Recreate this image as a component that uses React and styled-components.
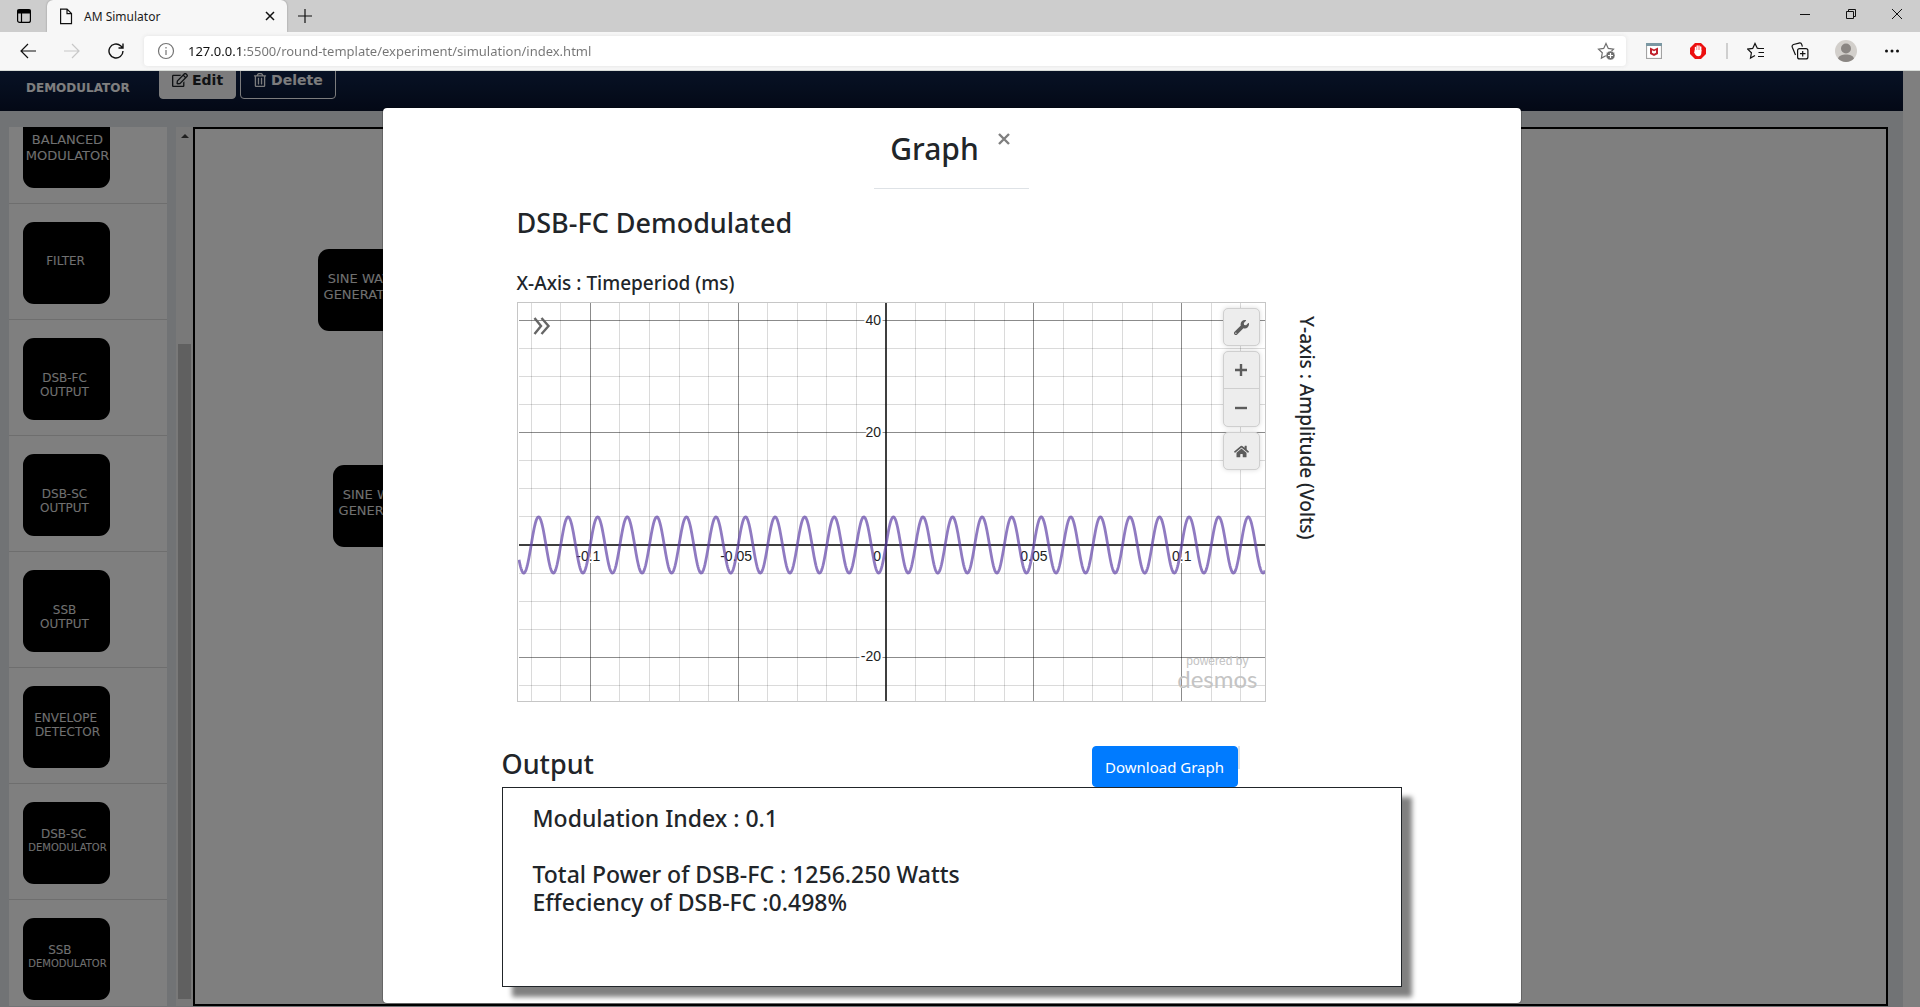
import React from "react";
import styled, { createGlobalStyle, css } from "styled-components";
import { FaHome, FaRegEdit, FaRegTrashAlt, FaWrench } from "react-icons/fa";

const uiFont = `"Noto Sans", "Open Sans", sans-serif`;

const GlobalStyle = createGlobalStyle`
  *, *::before, *::after { box-sizing: border-box; }
  body {
    margin: 0;
    font-family: ${uiFont};
    color: #212529;
    background: #fff;
  }
  h1, h2, h3, p { margin: 0; font-weight: 500; }
  button, input { font: inherit; }
`;

const Screen = styled.div`
  display: flex;
  flex-direction: column;
  height: 100vh;
  overflow: hidden;
`;

/* ---------- browser frame ---------- */

const TabStrip = styled.div`
  display: flex;
  flex: none;
  height: 32px;
  background: #cdcdcd;
`;

const TabMenu = styled.button`
  display: grid;
  place-items: center;
  width: 47px;
  padding: 0;
  border: 0;
  background: none;
`;

const Tab = styled.div`
  display: flex;
  align-items: center;
  gap: 11px;
  width: 240px;
  padding: 0 10px 0 12px;
  border-radius: 6px 6px 0 0;
  background: #f7f7f7;
  box-shadow: 0 0 2px #8a8a8a;
  font-size: 12px;
  color: #1b1b1b;
`;

const TabTitle = styled.span`
  flex: 1;
`;

const PlainButton = styled.button`
  display: grid;
  place-items: center;
  flex: none;
  width: ${(p) => p.$w || 44}px;
  padding: 0;
  border: 0;
  background: none;
  color: #111;
`;

const WindowButtons = styled.div`
  display: flex;
  height: 28px;
  margin-left: auto;
`;

const Toolbar = styled.div`
  display: flex;
  flex: none;
  align-items: center;
  height: 39px;
  padding: 0 6px;
  border-bottom: 1px solid #d8dcd8;
  background: #f7f7f7;
`;

const AddressBar = styled.form`
  display: flex;
  flex: 1;
  align-items: center;
  gap: 13px;
  height: 30px;
  margin: 0 6px;
  padding: 0 11px 0 13px;
  border-radius: 4px;
  background: #fff;
  box-shadow: 0 0 4px #e2e2e2;
`;

const AddressInput = styled.input`
  flex: 1;
  min-width: 0;
  padding: 0;
  border: 0;
  outline: 0;
  font-size: 13px;
  background: linear-gradient(90deg, #111 56px, #747474 56px);
  background-clip: text;
  color: transparent;
`;

const ToolDivider = styled.span`
  width: 2px;
  height: 16px;
  margin: 0 6px;
  background: #cfcfcf;
`;

/* ---------- page under the dialog ---------- */

const Viewport = styled.div`
  position: relative;
  display: flex;
  flex: 1;
  min-height: 0;
  overflow: hidden;
`;

const Page = styled.div`
  display: flex;
  flex: 1;
  flex-direction: column;
  min-width: 0;
  background: #e3e6ea;
`;

const PageScrollbar = styled.div`
  width: 17px;
  background: #fff;
`;

const Navbar = styled.header`
  display: flex;
  flex: none;
  align-items: flex-end;
  gap: 4px;
  height: 40px;
  padding: 0 26px 12px;
  overflow: hidden;
  background: linear-gradient(#10244a, #08122c);
  font-family: "DejaVu Sans", sans-serif;
  font-weight: 700;
`;

const Brand = styled.h1`
  width: 129px;
  font-size: 12px;
  line-height: 22px;
  font-weight: 700;
  color: #fff;
`;

const NavButton = styled.button`
  display: flex;
  flex: none;
  align-items: center;
  gap: 4px;
  height: 38px;
  padding: 0 12px;
  border: 1px solid #f8f9fa;
  border-radius: 4px;
  font-size: 14px;
  background: ${(p) => (p.$filled ? "#f8f9fa" : "transparent")};
  color: ${(p) => (p.$filled ? "#212529" : "#f8f9fa")};
`;

const Workspace = styled.div`
  display: flex;
  flex: 1;
  min-height: 0;
  padding: 16px 15px 1px 9px;
`;

const Palette = styled.ul`
  width: 158px;
  margin: 0 9px 0 0;
  padding: 0;
  overflow: hidden;
  list-style: none;
  background: #fff;
`;

const PaletteItem = styled.li`
  display: flex;
  align-items: flex-end;
  height: ${(p) => (p.$cut ? 77 : 116)}px;
  padding: 0 14px 15px;
  overflow: hidden;
  border-bottom: 1px solid #dcdcdc;
`;

const tileFace = css`
  display: flex;
  flex: none;
  flex-direction: column;
  align-items: center;
  justify-content: center;
  width: 87px;
  height: 82px;
  border: 0;
  border-radius: 11px;
  background: #000;
  color: #e0e0e0;
  font-family: "DejaVu Sans", sans-serif;
  white-space: pre;
`;

const tilePadding = {
  low: "12px 4px 0 0",
  middle: "2px 0 0 2px",
  high: "0 0 5px 2px",
};

const Tile = styled.div`
  ${tileFace}
  padding: ${(p) => tilePadding[p.$place || "high"]};
`;

const TileLine = styled.span`
  font-size: ${(p) => p.$size || 12}px;
  line-height: ${(p) => (p.$size === 13 ? 16 : 14)}px;
`;

const PaletteScrollbar = styled.div`
  display: flex;
  flex-direction: column;
  align-items: center;
  width: 17px;
  background: #f3f3f3;
`;

const ScrollArrow = styled.span`
  margin: 7px 0 206px;
  border: 4px solid transparent;
  border-top: 0;
  border-bottom-color: #404040;
`;

const ScrollThumb = styled.span`
  flex: 1;
  width: 13px;
  margin-bottom: 7px;
  background: #c1c1c1;
`;

const Canvas = styled.div`
  position: relative;
  flex: 1;
  border: 2px solid #000;
  background: #fff;
`;

const Node = styled.div`
  ${tileFace}
  position: absolute;
  padding: 0 0 6px 4px;
  left: ${(p) => p.$x}px;
  top: ${(p) => p.$y}px;
`;

/* ---------- dialog ---------- */

const Backdrop = styled.div`
  position: absolute;
  inset: 0;
  display: flex;
  align-items: flex-start;
  justify-content: center;
  padding: 36px 17px 0 0;
  background: rgba(0, 0, 0, 0.5);
`;

const Dialog = styled.section`
  width: 100%;
  max-width: 1140px;
  padding-bottom: 16px;
  border: 1px solid rgba(0, 0, 0, 0.2);
  border-radius: 5px;
  background: #fff;
  background-clip: padding-box;
`;

const DialogHeader = styled.header`
  display: flex;
  align-items: flex-start;
  gap: 16px;
  width: fit-content;
  margin: 0 auto;
  padding: 17px 16px 15px;
  border-bottom: 1px solid #dee2e6;
`;

const DialogTitle = styled.h2`
  font-size: 30px;
  line-height: 48px;
`;

const CloseButton = styled.button`
  display: grid;
  place-items: center;
  width: 18px;
  height: 28px;
  padding: 0;
  border: 0;
  background: none;
  color: #7f7f7f;
`;

const DialogBody = styled.div`
  max-width: 900px;
  margin: 0 auto;
  padding-top: 18px;
`;

const GraphSection = styled.div`
  padding-left: 15px;
`;

const GraphTitle = styled.h3`
  margin-bottom: 32px;
  font-size: 27px;
  line-height: 32px;
`;

const AxisName = styled.p`
  font-size: 19px;
  line-height: 24px;
  ${(p) =>
    p.$vertical
      ? css`
          padding-top: 14px;
          writing-mode: vertical-rl;
        `
      : css`
          margin-bottom: 7px;
        `}
`;

const GraphRow = styled.div`
  display: grid;
  grid-template-columns: minmax(0, 749px) auto;
  justify-content: start;
  gap: 29px;
`;

const Graph = styled.div`
  position: relative;
  border: 1px solid #c6c6c6;

  > svg {
    display: block;
    width: 100%;
    height: auto;
    font-family: "Liberation Sans", Arial, sans-serif;
  }
`;

const ExpandButton = styled.button`
  position: absolute;
  top: 14px;
  left: 15px;
  padding: 0;
  border: 0;
  background: none;
  line-height: 0;
`;

const GraphTools = styled.div`
  position: absolute;
  top: 5px;
  right: 5px;
  display: flex;
  flex-direction: column;
  gap: 5px;
`;

const ToolGroup = styled.div`
  display: flex;
  flex-direction: column;
  border: 1px solid #cfcfcf;
  border-radius: 5px;
  background: #ededed;
  box-shadow: 0 0 5px rgba(0, 0, 0, 0.15);
`;

const ToolButton = styled.button`
  display: grid;
  place-items: center;
  width: 35px;
  height: 36px;
  padding: 0;
  border: 0;
  background: none;
  color: #5c5c5c;

  & + & {
    height: 38px;
    border-top: 1px solid #cfcfcf;
  }
`;

const PoweredBy = styled.div`
  position: absolute;
  right: 7px;
  bottom: 10px;
  text-align: center;
  color: #c4c4c4;
  font: 12px/12px "Liberation Sans", Arial, sans-serif;
`;

const DesmosName = styled.div`
  font: 24px/24px Lato, sans-serif;
`;

const OutputHeader = styled.div`
  display: flex;
  align-items: flex-start;
  margin-top: 44px;
`;

const OutputTitle = styled.h3`
  flex: 1;
  font-size: 27px;
  line-height: 36px;
`;

const DownloadButton = styled.button`
  height: 41px;
  padding: 0 12px;
  min-width: 146px;
  border: 1px solid #007bff;
  border-radius: 4px;
  background: #007bff;
  color: #fff;
  font-size: 15px;
`;

const Sliver = styled.span`
  width: 2px;
  height: 23px;
  margin-right: 162px;
  background: #dee2e6;
`;

const OutputBox = styled.div`
  min-height: 200px;
  padding: 16px 30px;
  border: 1px solid #212529;
  background: #fff;
  box-shadow: 10px 10px 5px #808080;
  font-size: 23px;
  line-height: 28px;
`;

const OutputLine = styled.p`
  min-height: 28px;
`;

/* ---------- data ---------- */

const palette = [
  { lines: [["BALANCED", 13], ["MODULATOR", 13]], cut: true, place: "middle" },
  { lines: [["FILTER "]] },
  { lines: [["DSB-FC"], ["OUTPUT"]], place: "low" },
  { lines: [["DSB-SC"], ["OUTPUT"]], place: "low" },
  { lines: [["SSB"], ["OUTPUT"]], place: "low" },
  { lines: [["ENVELOPE "], ["DETECTOR"]] },
  { lines: [["DSB-SC  "], ["DEMODULATOR", 10]] },
  { lines: [["SSB    "], ["DEMODULATOR", 10]] },
];

const nodes = [
  { x: 123, y: 120 },
  { x: 138, y: 336 },
];

const results = [
  "Modulation Index : 0.1",
  "",
  "Total Power of DSB-FC : 1256.250 Watts",
  "Effeciency of DSB-FC :0.498%",
];

/* ---------- graph drawing ---------- */

const W = 747;
const H = 398;
const OX = 368;
const OY = 242;
const DX = 29.57;
const DY = 28.05;

function wavePath() {
  let d = "";
  for (let x = 1; x <= W; x += 0.5) {
    const y = OY - DY * Math.sin(((x - OX) / DX) * 2 * Math.PI);
    d += `${d ? "L" : "M"}${x} ${y.toFixed(2)}`;
  }
  return d;
}

const xLabels = [
  [-10, "-0.1"],
  [-5, "-0.05"],
  [5, "0.05"],
  [10, "0.1"],
];
const yLabels = [
  [8, "40"],
  [4, "20"],
  [-4, "-20"],
];

function Plot() {
  const cols = [];
  for (let i = -12; i <= 12; i++) if (i) cols.push(i);
  const rows = [];
  for (let j = -5; j <= 8; j++) if (j) rows.push(j);
  const halo = { stroke: "#fff", strokeWidth: 4, paintOrder: "stroke", strokeLinejoin: "round" };
  return (
    <svg viewBox={`0 0 ${W} ${H}`} role="img" aria-label="Demodulated sine wave">
      <g shapeRendering="crispEdges" stroke="#000">
        {cols.map((i) => {
          const x = Math.floor(OX + i * DX) + 0.5;
          return <line key={i} x1={x} x2={x} y1="0" y2={H} opacity={i % 5 ? 0.14 : 0.45} />;
        })}
        {rows.map((j) => {
          const y = Math.floor(OY - j * DY) + 0.5;
          return <line key={j} x1="1" x2={W} y1={y} y2={y} opacity={j % 4 ? 0.14 : 0.45} />;
        })}
        <line x1={OX} x2={OX} y1="0" y2={H} strokeWidth="2" opacity="0.75" />
        <line x1="1" x2={W} y1={OY} y2={OY} strokeWidth="2" opacity="0.75" />
      </g>
      <g fontSize="14" fill="#222" {...halo}>
        {xLabels.map(([i, t]) => (
          <text key={t} x={OX + i * DX - (i < 0 ? 2 : 0)} y="258" textAnchor="middle">{t}</text>
        ))}
        {yLabels.map(([j, t]) => (
          <text key={t} x={OX - 5} y={Math.round(OY - j * DY) + 4} textAnchor="end">{t}</text>
        ))}
        <text x={OX - 5} y="258" textAnchor="end">0</text>
      </g>
      <path d={wavePath()} fill="none" stroke="#6042a6" strokeWidth="2.8" opacity="0.7" />
    </svg>
  );
}

/* ---------- icons ---------- */

const Icon = ({ size = 16, children, stroke = "currentColor", sw = 1.2, ...rest }) => (
  <svg width={size} height={size} viewBox={`0 0 ${size} ${size}`} fill="none" stroke={stroke} strokeWidth={sw} aria-hidden="true" {...rest}>
    {children}
  </svg>
);

const STAR = "M9 1.5l2.3 4.9 5.2.7-3.8 3.7.9 5.3L9 13.600l-4.600 2.500.9-5.300L1.500 7.100l5.200-.7z";

function BrowserFrame() {
  return (
    <>
      <TabStrip>
        <TabMenu aria-label="Tab actions">
          <Icon size={14} stroke="#000">
            <rect x="0.600" y="0.600" width="12.800" height="12.800" rx="2" />
            <path d="M1 1h12v3H1z" fill="#000" />
            <path d="M4.500 4v9" />
          </Icon>
        </TabMenu>
        <Tab>
          <Icon size={17} style={{ width: 14 }} viewBox="0 0 14 17" stroke="#111">
            <path d="M1.600 1.100h6.400l4.500 4.500v10H1.600zM8 1.100v4.500h4.500" />
          </Icon>
          <TabTitle>AM Simulator</TabTitle>
          <PlainButton $w={14} aria-label="Close tab">
            <Icon size={10} sw={1.5}><path d="M1 1l8 8M9 1L1 9" /></Icon>
          </PlainButton>
        </Tab>
        <PlainButton $w={36} aria-label="New tab">
          <Icon size={14}><path d="M7 0v14M0 7h14" /></Icon>
        </PlainButton>
        <WindowButtons>
          <PlainButton $w={46} aria-label="Minimize">
            <Icon size={10} sw={1}><path d="M0 5.500h10" /></Icon>
          </PlainButton>
          <PlainButton $w={46} aria-label="Restore">
            <Icon size={10} sw={1}><path d="M.5 2.500h7v7h-7zM2.500 2.500v-2h7v7h-2" /></Icon>
          </PlainButton>
          <PlainButton $w={46} aria-label="Close window">
            <Icon size={10} sw={1}><path d="M0 0l10 10M10 0L0 10" /></Icon>
          </PlainButton>
        </WindowButtons>
      </TabStrip>
      <Toolbar>
        <PlainButton aria-label="Back">
          <Icon><path d="M16 8H1M8 1L1 8l7 7" /></Icon>
        </PlainButton>
        <PlainButton aria-label="Forward">
          <Icon stroke="#c8c8c8"><path d="M0 8h15M8 1l7 7-7 7" /></Icon>
        </PlainButton>
        <PlainButton aria-label="Refresh">
          <Icon sw={1.4}><path d="M15 8A7 7 0 1 1 12.600 2.700L15 5M15 .5V5h-4.500" /></Icon>
        </PlainButton>
        <AddressBar>
          <Icon size={18} stroke="#747474">
            <circle cx="9" cy="9" r="7.500" />
            <path d="M9 8v5M9 5v1.500" />
          </Icon>
          <AddressInput
            aria-label="Address"
            defaultValue="127.0.0.1:5500/round-template/experiment/simulation/index.html"
          />
          <Icon size={18} stroke="#6f6f6f">
            <path d={STAR} />
            <circle cx="13.500" cy="13.500" r="4.500" fill="#6f6f6f" stroke="#fff" strokeWidth="0.500" />
            <path d="M13.500 11v5M11 13.500h5" stroke="#fff" />
          </Icon>
        </AddressBar>
        <PlainButton aria-label="McAfee WebAdvisor">
          <Icon stroke="none">
            <rect x="0.500" y="0.500" width="15" height="15" fill="#fff" stroke="#a3a3a3" />
            <path d="M0 0h16v3H0z" fill="#7b98a3" />
            <path d="M4 4.500l4 2 4-2v6.500l-4 2-4-2z" fill="#c0202b" />
            <path d="M6 7.300l2 1 2-1v2.500l-2 .9-2-.9z" fill="#fff" />
          </Icon>
        </PlainButton>
        <PlainButton aria-label="Ad blocker">
          <Icon stroke="none">
            <path d="M5 0h6l5 5v6l-5 5H5l-5-5V5z" fill="#ec1010" />
            <path d="M5.500 8V4.500M7.200 7V3M9 7V3M10.700 8V4" stroke="#fff" strokeWidth="1.400" strokeLinecap="round" />
            <path d="M4.800 7h6.600v3c0 2-1.400 3.300-3.200 3.300S5.300 12 4.200 9.500z" fill="#fff" />
          </Icon>
        </PlainButton>
        <ToolDivider />
        <PlainButton aria-label="Favorites">
          <Icon size={18}>
            <path d="M11.500 6.400L10.300 6.200 8 1.500 5.700 6.400l-5 .7 3.700 3.700-.9 5.300L8 13.600M10 6.500h7M11.500 10.500H17M11 14.500h6" />
          </Icon>
        </PlainButton>
        <PlainButton aria-label="Collections">
          <Icon size={18}>
            <rect x="6.600" y="6.600" width="10.300" height="10.300" rx="2" />
            <path d="M11.700 9v5.500M9 11.700h5.500M4.500 13L1.300 5.300C.8 4 1.300 3 2.500 2.500L8 1.100c1.500-.4 2.400.2 2.800 1.500l.6 2" />
          </Icon>
        </PlainButton>
        <PlainButton $w={48} aria-label="Profile">
          <Icon size={22} stroke="none">
            <circle cx="11" cy="11" r="11" fill="#d2cfcb" />
            <circle cx="11" cy="8.500" r="5" fill="#8a8683" />
            <path d="M3 18.500c1-3 4-4 8-4s7 1 8 4A11 11 0 0 1 11 22a11 11 0 0 1-8-3.500z" fill="#8a8683" />
          </Icon>
        </PlainButton>
        <PlainButton aria-label="Settings and more">
          <Icon size={14} stroke="none">
            <g fill="#111"><circle cx="1.500" cy="7" r="1.500" /><circle cx="7" cy="7" r="1.500" /><circle cx="12.500" cy="7" r="1.500" /></g>
          </Icon>
        </PlainButton>
      </Toolbar>
    </>
  );
}

function Simulator() {
  return (
    <Page>
      <Navbar>
        <Brand>DEMODULATOR</Brand>
        <NavButton $filled><FaRegEdit size={16} />Edit</NavButton>
        <NavButton><FaRegTrashAlt size={14} />Delete</NavButton>
      </Navbar>
      <Workspace>
        <Palette>
          {palette.map((item, i) => (
            <PaletteItem key={i} $cut={item.cut}>
              <Tile $place={item.place}>
                {item.lines.map(([text, size]) => (
                  <TileLine key={text} $size={size}>{text}</TileLine>
                ))}
              </Tile>
            </PaletteItem>
          ))}
        </Palette>
        <PaletteScrollbar>
          <ScrollArrow />
          <ScrollThumb />
        </PaletteScrollbar>
        <Canvas>
          {nodes.map((n, i) => (
            <Node key={i} $x={n.x} $y={n.y}>
              <TileLine $size={13}>SINE WAVE</TileLine>
              <TileLine $size={13}>GENERATOR</TileLine>
            </Node>
          ))}
        </Canvas>
      </Workspace>
    </Page>
  );
}

function GraphDialog() {
  return (
    <Backdrop>
      <Dialog role="dialog" aria-labelledby="graph-title">
        <DialogHeader>
          <DialogTitle id="graph-title">Graph</DialogTitle>
          <CloseButton aria-label="Close">
            <Icon size={12} sw={2.4}><path d="M1 1l10 10M11 1L1 11" /></Icon>
          </CloseButton>
        </DialogHeader>
        <DialogBody>
          <GraphSection>
            <GraphTitle>DSB-FC Demodulated</GraphTitle>
            <AxisName>X-Axis : Timeperiod (ms)</AxisName>
            <GraphRow>
              <Graph>
                <Plot />
                <ExpandButton aria-label="Show expressions">
                  <Icon size={18} stroke="#666" sw={2.4}><path d="M1.500 1l6.500 8-6.500 8M8.500 1l7 8-7 8" /></Icon>
                </ExpandButton>
                <GraphTools>
                  <ToolGroup>
                    <ToolButton aria-label="Graph settings"><FaWrench size={15} /></ToolButton>
                  </ToolGroup>
                  <ToolGroup>
                    <ToolButton aria-label="Zoom in">
                      <Icon size={12} sw={2.4}><path d="M6 0v12M0 6h12" /></Icon>
                    </ToolButton>
                    <ToolButton aria-label="Zoom out">
                      <Icon size={12} sw={2.4}><path d="M0 6h12" /></Icon>
                    </ToolButton>
                  </ToolGroup>
                  <ToolGroup>
                    <ToolButton aria-label="Default viewport"><FaHome size={15} /></ToolButton>
                  </ToolGroup>
                </GraphTools>
                <PoweredBy>
                  powered by
                  <DesmosName>desmos</DesmosName>
                </PoweredBy>
              </Graph>
              <AxisName $vertical>Y-axis : Amplitude (Volts)</AxisName>
            </GraphRow>
          </GraphSection>
          <OutputHeader>
            <OutputTitle>Output</OutputTitle>
            <DownloadButton>Download Graph</DownloadButton>
            <Sliver />
          </OutputHeader>
          <OutputBox>
            {results.map((line, i) => (
              <OutputLine key={i}>{line}</OutputLine>
            ))}
          </OutputBox>
        </DialogBody>
      </Dialog>
    </Backdrop>
  );
}

export default function App() {
  return (
    <Screen>
      <GlobalStyle />
      <BrowserFrame />
      <Viewport>
        <Simulator />
        <PageScrollbar />
        <GraphDialog />
      </Viewport>
    </Screen>
  );
}
